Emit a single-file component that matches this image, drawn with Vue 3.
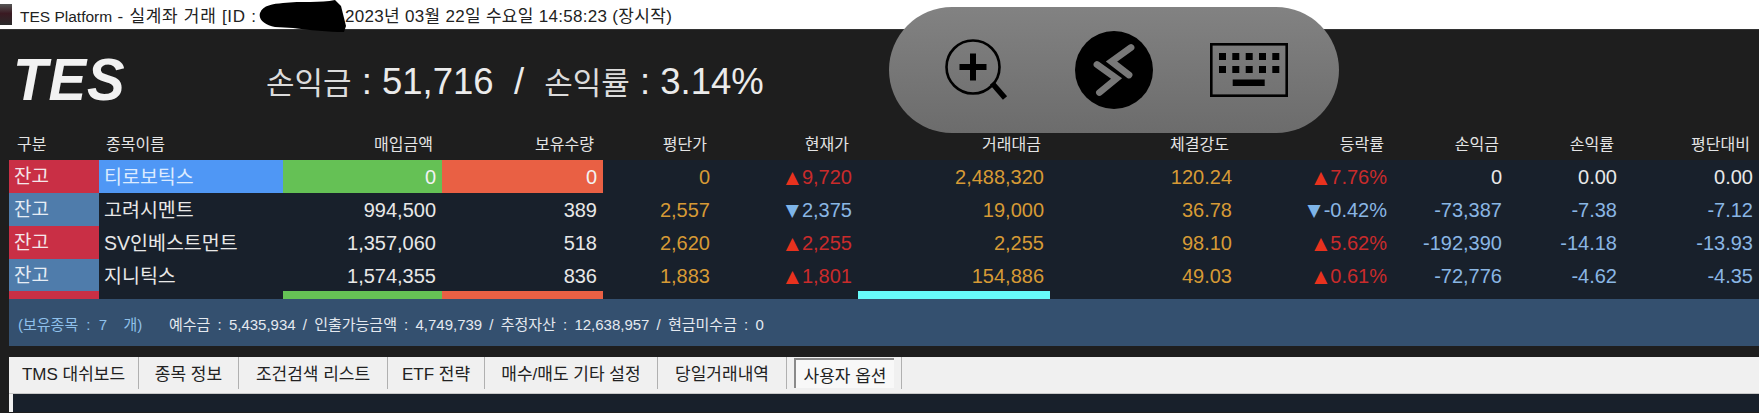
<template>
  <div class="screen">
    <!-- 타이틀바 -->
    <div class="titlebar">
      <div class="app-icon"></div>
      <div class="title-left"><span class="latin">TES Platform</span> - 실계좌 거래 [ID :</div>
      <span class="title-right">2023년 03월 22일 수요일 14:58:23 (장시작)</span>
    </div>
    <svg class="blob" viewBox="0 0 88 32" width="88" height="32">
      <path d="M1 13 C4 5 14 4 24 3 C42 1 62 3 76 0 L82 6 L87 26 L85 32 C70 32 50 30 34 28 L16 27 C6 25 -1 20 1 13 Z" fill="#000" />
    </svg>

    <!-- 손익 요약 -->
    <div class="summary">
      <div class="logo"><span>TES</span></div>
      <div class="profit">
        <span class="kr">손익금</span> : 51,716&nbsp; /&nbsp; <span class="kr">손익률</span> : 3.14%
      </div>
    </div>

    <!-- 잔고 테이블 -->
    <div class="table">
      <div class="row head">
        <div v-for="h in headers" :key="h" class="cell" :class="{ left: h === '구분' || h === '종목이름' }">{{ h }}</div>
      </div>

      <div v-for="r in rows" :key="r.name" class="row body">
        <div class="cell kind" :class="r.kind">잔고</div>
        <div class="cell name" :class="{ picked: r.picked }">{{ r.name }}</div>
        <div class="cell" :class="{ green: r.picked }">{{ r.buy }}</div>
        <div class="cell" :class="{ orange: r.picked }">{{ r.qty }}</div>
        <div class="cell gold">{{ r.avg }}</div>
        <div class="cell" :class="r.dir"><i class="arrow">{{ arrow(r.dir) }}</i>{{ r.cur }}</div>
        <div class="cell gold">{{ r.vol }}</div>
        <div class="cell gold">{{ r.power }}</div>
        <div class="cell" :class="r.dir"><i class="arrow">{{ arrow(r.dir) }}</i>{{ r.rate }}</div>
        <div class="cell" :class="{ minus: r.minus }">{{ r.pl }}</div>
        <div class="cell" :class="{ minus: r.minus }">{{ r.plr }}</div>
        <div class="cell" :class="{ minus: r.minus }">{{ r.diff }}</div>
      </div>

      <div class="row body cut">
        <div class="cell kind red"></div>
        <div class="cell"></div>
        <div class="cell green"></div>
        <div class="cell orange"></div>
        <div class="cell"></div>
        <div class="cell"></div>
        <div class="cell cyan"></div>
      </div>
    </div>

    <!-- 예수금 -->
    <div class="account">
      <span class="holding">(보유종목 : 7&nbsp; 개)</span>
      <span>예수금 : 5,435,934 / 인출가능금액 : 4,749,739 / 추정자산 : 12,638,957 / 현금미수금 : 0</span>
    </div>

    <!-- 탭 -->
    <div class="tabs">
      <div
        v-for="t in tabs"
        :key="t.label"
        class="tab"
        :class="{ active: t.active }"
        :style="{ width: t.width + 'px' }"
      >
        <span>{{ t.label }}</span>
      </div>
    </div>
    <div class="panel"></div>

    <!-- 원격 데스크톱 툴바 -->
    <div class="remote-bar">
      <svg class="ic-zoom" viewBox="0 0 64 64" width="64" height="64">
        <circle cx="29" cy="29" r="26.5" fill="none" stroke="#000" stroke-width="2.6" />
        <path d="M48 45 L61 60" stroke="#000" stroke-width="5.5" />
        <path d="M15.5 29 H42.5 M29 15.5 V42.5" stroke="#000" stroke-width="6" />
      </svg>
      <svg class="ic-remote" viewBox="0 0 78 78" width="78" height="78">
        <circle cx="39" cy="39" r="39" fill="#000" />
        <path d="M56 16.5 L36.5 30.5 L54 44 M22 33.5 L41.5 47.5 L24.5 61.5" fill="none" stroke="#787878" stroke-width="6.8" stroke-linecap="round" />
      </svg>
      <svg class="ic-keys" viewBox="0 0 78 54" width="78" height="54">
        <rect x="1.3" y="1.3" width="75.4" height="51.4" fill="none" stroke="#000" stroke-width="2.6" />
        <g v-for="y in [10, 23]" :key="y">
          <rect v-for="x in [9, 22.3, 35.7, 49, 62.3]" :key="x" :x="x" :y="y" width="7" height="7" fill="#000" />
        </g>
        <rect x="22.7" y="36.5" width="32" height="6.5" fill="#000" />
      </svg>
    </div>
  </div>
</template>

<script setup>
const headers = ['구분', '종목이름', '매입금액', '보유수량', '평단가', '현재가', '거래대금', '체결강도', '등락률', '손익금', '손익률', '평단대비']

const rows = [
  { kind: 'red', name: '티로보틱스', picked: true, buy: '0', qty: '0', avg: '0', dir: 'up', cur: '9,720', vol: '2,488,320', power: '120.24', rate: '7.76%', pl: '0', plr: '0.00', diff: '0.00' },
  { kind: 'blue', name: '고려시멘트', buy: '994,500', qty: '389', avg: '2,557', dir: 'down', cur: '2,375', vol: '19,000', power: '36.78', rate: '-0.42%', pl: '-73,387', plr: '-7.38', diff: '-7.12', minus: true },
  { kind: 'red', name: 'SV인베스트먼트', buy: '1,357,060', qty: '518', avg: '2,620', dir: 'up', cur: '2,255', vol: '2,255', power: '98.10', rate: '5.62%', pl: '-192,390', plr: '-14.18', diff: '-13.93', minus: true },
  { kind: 'blue', name: '지니틱스', buy: '1,574,355', qty: '836', avg: '1,883', dir: 'up', cur: '1,801', vol: '154,886', power: '49.03', rate: '0.61%', pl: '-72,776', plr: '-4.62', diff: '-4.35', minus: true }
]

const tabs = [
  { label: 'TMS 대쉬보드', width: 130 },
  { label: '종목 정보', width: 100 },
  { label: '조건검색 리스트', width: 149 },
  { label: 'ETF 전략', width: 97 },
  { label: '매수/매도 기타 설정', width: 173 },
  { label: '당일거래내역', width: 129 },
  { label: '사용자 옵션', width: 115, active: true }
]

const arrow = (dir) => (dir === 'up' ? '▲' : '▼')
</script>

<style>
html, body {
  margin: 0;
  background: #1e1e1e;
}
</style>

<style scoped>
.screen {
  position: relative;
  width: 1759px;
  height: 413px;
  overflow: hidden;
  background: #1e1e1e;
  color: #e8e8e8;
  font-family: "Liberation Sans", "Noto Sans CJK KR", sans-serif;
}

.titlebar {
  display: flex;
  align-items: center;
  height: 29px;
  background: #fff;
  border-bottom: 1px solid #333;
  color: #222;
  font-size: 17px;
}
.latin {
  font-size: 15.5px;
  letter-spacing: 0;
}
.app-icon {
  width: 12px;
  height: 21px;
  margin-right: 8px;
  background: linear-gradient(#555, #3a1a22 45%, #2a2a2a);
}
.title-left {
  width: 325px;
  white-space: nowrap;
  letter-spacing: 0.7px;
}
.title-right {
  letter-spacing: 0.3px;
}
.blob {
  position: absolute;
  left: 259px;
  top: 0;
}

.summary {
  display: flex;
  align-items: center;
  height: 100px;
}
.logo {
  width: 266px;
  padding-left: 13px;
  box-sizing: border-box;
  color: #f2f2f2;
  font-size: 60px;
  font-style: italic;
  font-weight: bold;
  line-height: 1;
}
.logo span {
  display: inline-block;
  transform: scaleX(0.94);
  transform-origin: left;
  letter-spacing: 1px;
}
.profit {
  font-size: 36.5px;
  color: #ebebeb;
  white-space: nowrap;
}
.kr {
  font-size: 31px;
  color: #dcdcdc;
}

.row {
  display: grid;
  grid-template-columns: 90px 184px 159px 161px 113px 142px 192px 188px 155px 115px 115px 136px;
  margin-left: 9px;
}
.cell {
  padding-right: 6px;
  text-align: right;
  white-space: nowrap;
}
.left {
  text-align: left;
}

.head {
  height: 30px;
  align-items: center;
  font-size: 16px;
  line-height: 28px;
  color: #e4e4e4;
}
.head .cell {
  padding-right: 9px;
}
.head .cell:nth-child(1) {
  padding-left: 8px;
}
.head .cell:nth-child(2) {
  padding-left: 7px;
}

.body {
  height: 33px;
  background: #18202b;
  font-size: 20px;
  line-height: 34px;
}
.body .cell {
  height: 33px;
}
.body:nth-child(5) {
  height: 32px;
}
.kind {
  padding-left: 5px;
  text-align: left;
  color: #f4e6ea;
  font-size: 19px;
}
.kind.red {
  background: #c92f45;
}
.kind.blue {
  background: #4f7cab;
  color: #e6edf5;
}
.name {
  padding-left: 5px;
  text-align: left;
  font-size: 19.5px;
}
.name.picked {
  background: #4f97f5;
  color: #dcebff;
}
.green {
  background: #65c155;
}
.orange {
  background: #e96044;
}
.green, .orange {
  color: #f2f2f2;
}
.gold {
  color: #d69a35;
}
.up {
  color: #c92b2b;
}
.up .arrow {
  color: #e8321e;
}
.down, .minus {
  color: #8ab6e4;
}
.down .arrow {
  color: #7db4e8;
}
.arrow {
  margin-right: 3px;
  font-size: 17px;
  font-style: normal;
  font-family: "DejaVu Sans", sans-serif;
  vertical-align: 1px;
}
.cyan {
  background: #66fbfb;
}
.body.cut {
  height: 8px;
}
.body.cut .cell {
  height: 8px;
}

.account {
  display: flex;
  align-items: center;
  height: 47px;
  margin-left: 9px;
  padding: 2px 0 0 9px;
  box-sizing: border-box;
  background: #34506f;
  color: #e4e9ef;
  font-size: 15px;
  word-spacing: 3px;
}
.holding {
  width: 151px;
  color: #8fc0ea;
  word-spacing: 4px;
}

.tabs {
  display: flex;
  height: 36px;
  margin: 11px 0 0 9px;
  background: #f0f0f0;
  border-bottom: 1px solid #c8c8c8;
  color: #222;
  font-size: 17px;
}
.tab {
  display: flex;
  align-items: center;
  justify-content: center;
  box-sizing: border-box;
  height: 32px;
  padding-bottom: 2px;
  border-right: 1px solid #b0b0b0;
}
.tab.active {
  padding-bottom: 0;
}
.tab.active span {
  display: flex;
  align-items: center;
  justify-content: center;
  width: 100px;
  height: 30px;
  background: #f8f8f8;
  border-top: 2px solid #8a8a8a;
  border-left: 2px solid #8a8a8a;
  box-sizing: border-box;
}
.panel {
  height: 18px;
  margin-left: 9px;
  background: #18202b;
  border-left: 4px solid #f0f0f0;
}

.remote-bar {
  position: absolute;
  left: 889px;
  top: 7px;
  display: flex;
  align-items: center;
  width: 450px;
  height: 126px;
  border-radius: 63px;
  background: linear-gradient(#828282, #6c6c6c);
}
.ic-zoom {
  margin-left: 55px;
}
.ic-remote {
  margin-left: 67px;
}
.ic-keys {
  margin-left: 57px;
}
</style>
